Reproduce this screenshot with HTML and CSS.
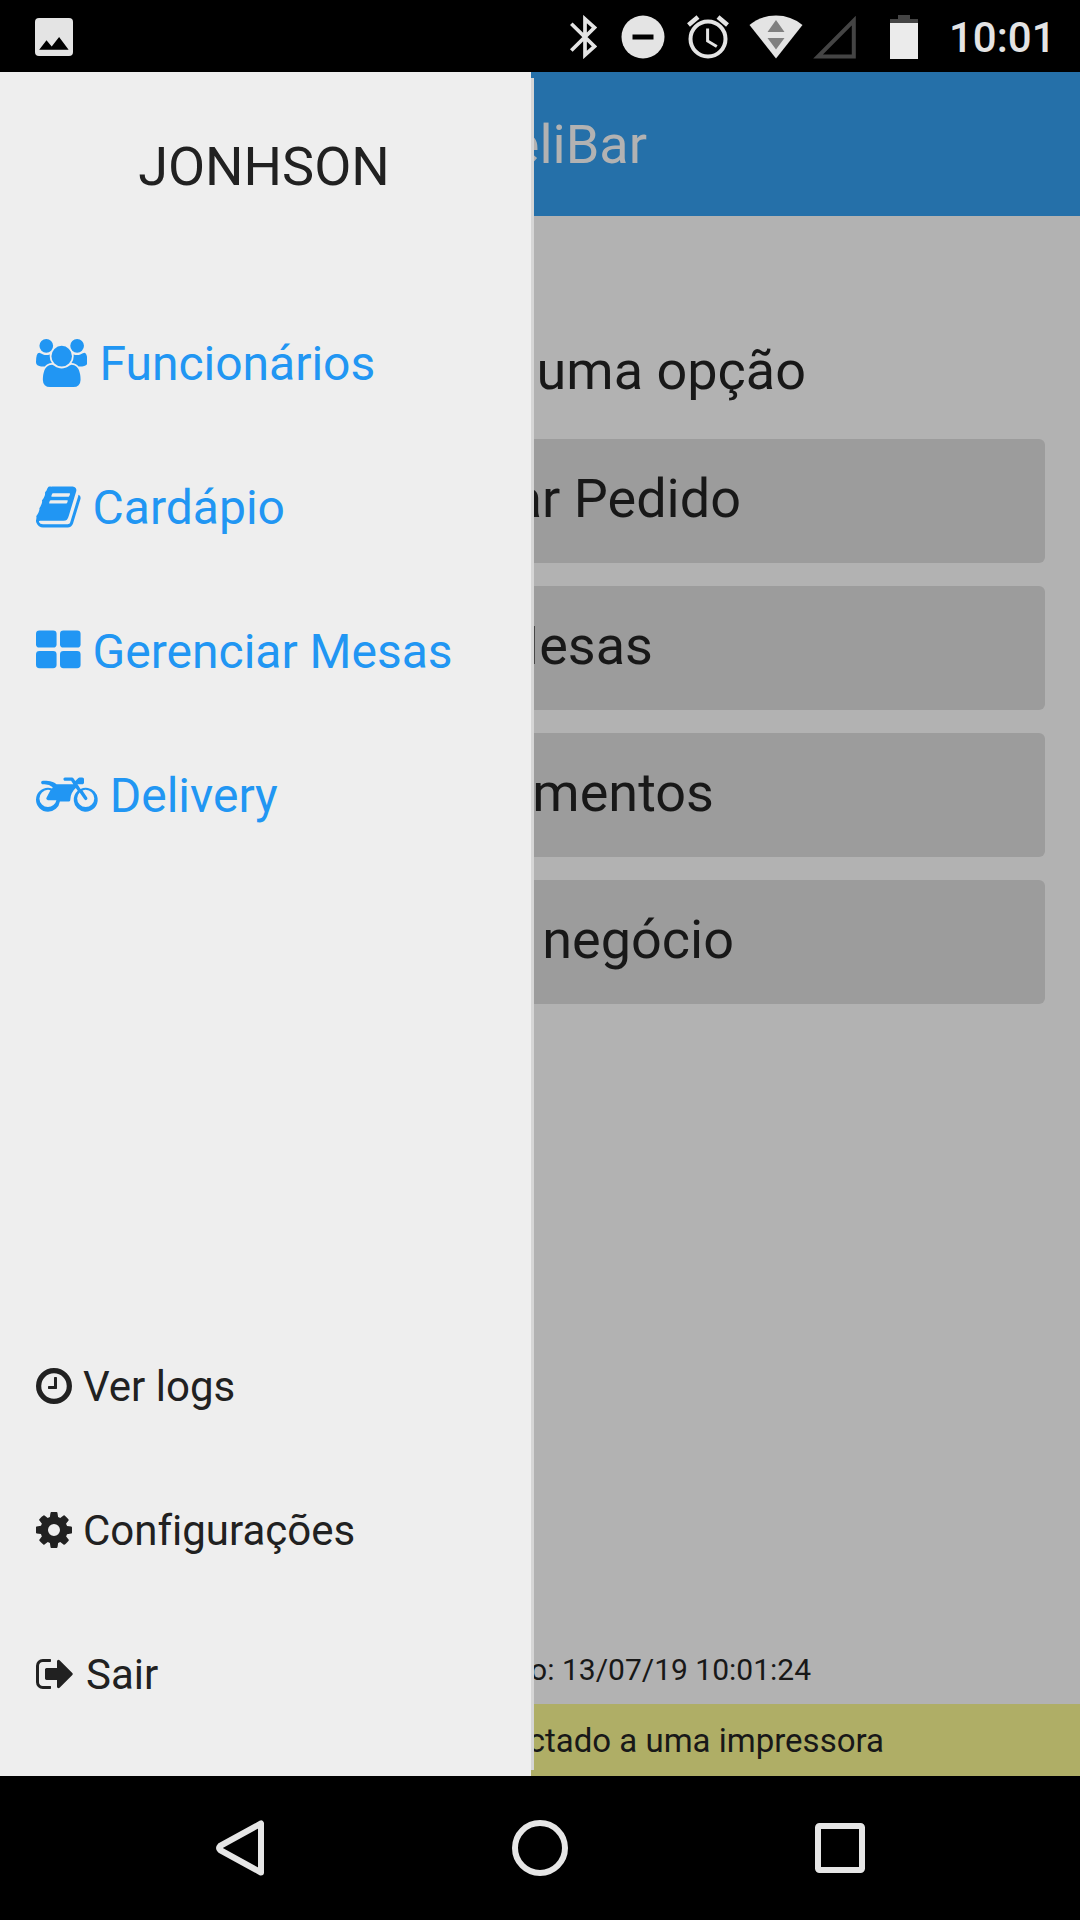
FILE: index.html
```html
<!DOCTYPE html>
<html lang="pt-BR">
<head>
<meta charset="utf-8">
<title>DeliBar</title>
<link rel="stylesheet" href="styles.css">
</head>
<body>
<div class="phone">
  <header class="status">
    <svg class="photo" viewBox="0 0 38 38"><path fill="#e4e4e4" d="M4 0h30q4 0 4 4v30q0 4-4 4H4q-4 0-4-4V4q0-4 4-4z"/><path d="M4.200 31.700l7.300-9.500 5.200 6.300 7.400-9.500 9.500 12.700z"/></svg>
    <svg class="bluetooth" viewBox="0 0 28 44" fill="none" stroke="#e4e4e4" stroke-width="3.700"><path d="M1.300 8.800L24.500 31.500 15 40V4l9.500 8.500L1.300 35.500"/></svg>
    <svg class="dnd" viewBox="0 0 44 44"><circle cx="22" cy="22" r="21.500" fill="#e4e4e4"/><path d="M11.500 19.500h21v5h-21z"/></svg>
    <svg class="alarm" viewBox="0 0 42 44" fill="none" stroke="#e4e4e4"><circle cx="21" cy="24" r="17.500" stroke-width="4"/><path d="M20.600 13.500V26l9.200 5.500" stroke-width="3"/><path d="M1.500 10L11 2M40.500 10L31 2" stroke-width="4.500"/></svg>
    <svg class="wifi" viewBox="0 0 54 44"><path fill="#e4e4e4" d="M.500 10Q12 .500 27 .500T53.500 10L27 43.500z"/><path fill="#808080" d="M18.500 17L27 5l8.500 12zM18.500 23L27 34.500 35.500 23z"/></svg>
    <svg class="signal" viewBox="0 0 43 44"><path fill="none" stroke="#444" stroke-width="4" d="M5 41.500h35.800V5.500z"/></svg>
    <svg class="battery" viewBox="0 0 28 44"><path fill="#444" d="M8 0h12v4h8v5H0V4h8z"/><path fill="#ebebeb" d="M0 8h28v36H0z"/></svg>
    <span class="time">10:01</span>
  </header>

  <div class="app">
    <div class="toolbar"><h1>DeliBar</h1></div>
    <main class="content">
      <h2>uma opção</h2>
      <div class="options">
        <div class="option order">Realizar Pedido</div>
        <div class="option tables">Mesas</div>
        <div class="option payments">Recebimentos</div>
        <div class="option business">Meu negócio</div>
      </div>
    </main>
    <p class="sync">Atualizado: 13/07/19 10:01:24</p>
    <p class="printer">Não conectado a uma impressora</p>

    <aside class="drawer">
      <div class="user">JONHSON</div>
      <nav class="menu">
        <a><svg class="w1920" viewBox="0 0 1920 1792"><path d="M593 896q-162 5-265 128h-134q-82 0-138-40.500t-56-118.500q0-353 124-353 6 0 43.500 21t97.500 42.500 119 21.500q67 0 133-23-5 37-5 66 0 139 81 256zm1071 637q0 120-73 189.500t-194 69.500h-874q-121 0-194-69.500t-73-189.500q0-53 3.500-103.500t14-109 26.500-108.500 43-97.500 62-81 85.500-53.500 111.500-20q10 0 43 21.500t73 48 107 48 135 21.500 135-21.500 107-48 73-48 43-21.500q61 0 111.500 20t85.500 53.500 62 81 43 97.500 26.500 108.500 14 109 3.500 103.500zm-1024-1277q0 106-75 181t-181 75-181-75-75-181 75-181 181-75 181 75 75 181zm704 384q0 159-112.500 271.500t-271.500 112.500-271.500-112.500-112.500-271.500 112.500-271.500 271.500-112.500 271.500 112.500 112.500 271.500zm576 225q0 78-56 118.500t-138 40.500h-134q-103-123-265-128 81-117 81-256 0-29-5-66 66 23 133 23 59 0 119-21.500t97.500-42.500 43.500-21q124 0 124 353zm-128-609q0 106-75 181t-181 75-181-75-75-181 75-181 181-75 181 75 75 181z"/></svg><span>Funcionários</span></a>
        <a><svg class="w1664" viewBox="0 0 1664 1792"><path d="M1639 478q40 57 18 129l-275 906q-19 64-76.500 107.500t-122.500 43.500h-923q-77 0-148.500-53.500t-99.500-131.500q-24-67-2-127 0-4 3-27t4-37q1-8-3-21.500t-3-19.500q2-11 8-21t16.500-23.500 16.500-23.500q23-38 45-91.500t30-91.500q3-10 .5-30t-.5-28q3-11 17-28t17-23q21-36 42-92t25-90q1-9-2.500-32t.5-28q4-13 22-30.500t22-22.500q19-26 42.500-84.500t27.500-96.500q1-8-3-25.500t-2-26.500q2-8 9-18t18-23 17-21q8-12 16.500-30.500t15-35 16-36 19.500-32 26.500-23.500 36-11.500 47.500 5.500l-1 3q38-9 51-9h761q74 0 114 56t18 130l-274 906q-36 119-71.500 153.500t-128.500 34.500h-869q-27 0-38 15-11 16-1 43 24 70 144 70h923q29 0 56-15.500t35-41.500l300-987q7-22 5-57 38 15 59 43zm-1064 2q-4 13 2 22.500t20 9.500h608q13 0 25.500-9.500t16.500-22.500l21-64q4-13-2-22.500t-20-9.500h-608q-13 0-25.500 9.500t-16.500 22.500zm-83 256q-4 13 2 22.500t20 9.500h608q13 0 25.500-9.500t16.500-22.500l21-64q4-13-2-22.500t-20-9.500h-608q-13 0-25.500 9.500t-16.500 22.500z"/></svg><span>Cardápio</span></a>
        <a><svg class="w1664" viewBox="0 0 1664 1792"><rect y="128" width="768" height="640" rx="128"/><rect x="896" y="128" width="768" height="640" rx="128"/><rect y="896" width="768" height="640" rx="128"/><rect x="896" y="896" width="768" height="640" rx="128"/></svg><span>Gerenciar Mesas</span></a>
        <a><svg class="w2304" viewBox="0 0 2304 1792"><path transform="translate(0 128)" d="M2301 892q12 103-22 198.500t-99 163.500-158.500 106-196.500 31q-161-11-279.500-125t-134.500-274q-12-111 27.500-210.500t118.500-170.500l-71-107q-96 80-151 194t-55 244q0 27-18.500 46.500t-45.500 19.500h-325q-23 164-149 274t-294 110q-185 0-316.500-131.500t-131.500-316.500 131.500-316.500 316.500-131.500q76 0 152 27l24-45q-123-110-304-110h-64q-26 0-45-19t-19-45 19-45 45-19h128q78 0 145 13.500t116.500 38.500 71.500 39.500 51 36.500h627l-85-128h-222q-30 0-49-22.500t-14-52.500q4-23 23-38t43-15h253q33 0 53 28l70 105 114-114q19-19 46-19h101q26 0 45 19t19 45v128q0 26-19 45t-45 19h-179l115 172q131-63 275-36 143 26 244 134.500t118 253.500zm-1853 324q115 0 203-72.500t111-183.500h-314q-35 0-55-31-18-32-1-63l147-277q-47-13-91-13-132 0-226 94t-94 226 94 226 226 94zm1408 0q132 0 226-94t94-226-94-226-226-94q-60 0-121 24l174 260q15 23 10 49t-27 40q-15 11-36 11-35 0-53-29l-174-260q-93 95-93 225 0 132 94 226t226 94z"/></svg><span>Delivery</span></a>
      </nav>
      <nav class="menu secondary">
        <a><svg class="w1536" viewBox="0 0 1536 1792"><circle cx="768" cy="896" r="656" fill="none" stroke="currentColor" stroke-width="224"/><path d="M896 544v448q0 14-9 23t-23 9h-320q-14 0-23-9t-9-23v-64q0-14 9-23t23-9h224v-352q0-14 9-23t23-9h64q14 0 23 9t9 23z"/></svg><span>Ver logs</span></a>
        <a><svg class="w1536" viewBox="0 0 1536 1792"><path d="M1024 896q0-106-75-181t-181-75-181 75-75 181 75 181 181 75 181-75 75-181zm512-109v222q0 12-8 23t-20 13l-185 28q-19 54-39 91 35 50 107 138 10 12 10 25t-9 23q-27 37-99 108t-94 71q-12 0-26-9l-138-108q-44 23-91 38-16 136-29 186-7 28-36 28h-222q-14 0-24.500-8.500t-11.500-21.500l-28-184q-49-16-90-37l-141 107q-10 9-25 9-14 0-25-11-126-114-165-168-7-10-7-23 0-12 8-23 15-21 51-66.500t54-70.500q-27-50-41-99l-183-27q-13-2-21-12.500t-8-23.500v-222q0-12 8-23t19-13l186-28q14-46 39-92-40-57-107-138-10-12-10-24 0-10 9-23 26-36 98.500-107.500t94.500-71.500q13 0 26 10l138 107q44-23 91-38 16-136 29-186 7-28 36-28h222q14 0 24.500 8.500t11.500 21.500l28 184q49 16 90 37l142-107q9-9 24-9 13 0 25 10 129 119 165 170 7 8 7 22 0 12-8 23-15 21-51 66.500t-54 70.500q26 50 41 98l183 28q13 2 21 12.500t8 23.500z"/></svg><span>Configurações</span></a>
        <a><svg class="w1664" viewBox="0 0 1664 1792"><path d="M640 1440q0 4 1 20t.5 26.500-3 23.500-10 19.500-20.500 6.500h-320q-119 0-203.500-84.500t-84.500-203.500v-704q0-119 84.500-203.500t203.500-84.500h320q13 0 22.500 9.500t9.500 22.500q0 4 1 20t.5 26.500-3 23.500-10 19.500-20.500 6.500h-320q-66 0-113 47t-47 113v704q0 66 47 113t113 47h312l11.500 1 11.500 3 8 5.500 7 9 2 13.500zM1568 896q0 26-19 45l-544 544q-19 19-45 19t-45-19-19-45v-288h-448q-26 0-45-19t-19-45v-384q0-26 19-45t45-19h448v-288q0-26 19-45t45-19 45 19l544 544q19 19 19 45z"/></svg><span>Sair</span></a>
      </nav>
    </aside>
  </div>

  <footer class="navbar">
    <svg class="back" viewBox="0 0 48 56"><path d="M45 3.500v49L4 30q-2-2 0-4z"/></svg>
    <svg class="home" viewBox="0 0 56 56"><circle cx="28" cy="28" r="25"/></svg>
    <svg class="recent" viewBox="0 0 50 50"><rect x="3" y="3" width="44" height="44" rx="1.500"/></svg>
  </footer>
</div>
</body>
</html>
```
FILE: styles.css
```css
* { box-sizing: border-box; margin: 0; padding: 0; }
body { font-family: Roboto, sans-serif; font-variant-ligatures: none; background: #000; color: #181818; }
svg { display: block; flex: none; }

.phone { width: 1080px; height: 1920px; display: flex; flex-direction: column; overflow: hidden; }

.status { height: 72px; display: flex; align-items: center; padding: 1px 32px 0 35px; background: #000; }
.photo { width: 38px; height: 38px; margin-right: auto; }
.bluetooth { width: 28px; height: 44px; margin-right: 23px; }
.dnd { width: 44px; height: 44px; margin-right: 22px; }
.alarm { width: 42px; height: 44px; margin-right: 20px; }
.wifi { width: 54px; height: 44px; margin-right: 10px; }
.signal { width: 43px; height: 44px; margin-right: 34px; }
.battery { width: 28px; height: 44px; margin-right: 31px; }
.time { width: 99px; font-size: 42px; font-weight: 500; line-height: 48px; color: #e4e4e4; white-space: nowrap; padding-top: 3px; }

.app { position: relative; flex: 1; display: flex; flex-direction: column; background: #b2b2b2; text-align: right; white-space: nowrap; }
.toolbar { height: 144px; display: flex; align-items: center; justify-content: flex-end; padding-right: 433px; background: #2570a9; }
.toolbar h1 { font-size: 54px; font-weight: 400; color: #b2b2b2; }
.content { flex: 1; }
.content h2 { font-size: 54px; font-weight: 400; line-height: 64px; padding: 123px 274px 36px 0; }
.options { display: flex; flex-direction: column; gap: 23px; padding: 0 35px; }
.option { height: 124px; padding-top: 28px; font-size: 54px; line-height: 64px; border-radius: 6px; background: #9c9c9c; }
.order { padding-right: 304px; }
.tables { padding-right: 392px; }
.payments { padding-right: 331px; }
.business { padding-right: 311px; }
.sync { height: 70px; padding-right: 269px; font-size: 30px; line-height: 72px; }
.printer { height: 72px; padding-right: 196px; font-size: 33px; line-height: 74px; background: #afae66; }

.drawer { position: absolute; left: 0; top: 0; width: 531px; height: 100%; display: flex; flex-direction: column; background: #eee; color: #212121; text-align: left; }
.drawer::after { content: ""; position: absolute; left: 531px; top: 6px; bottom: 6px; width: 3px; background: #d6d6d6; }
.user { height: 219px; padding-top: 63px; font-size: 54px; line-height: 64px; text-align: center; padding-right: 3px; }
.menu { color: #2196f3; font-size: 48px; }
.menu a { display: flex; align-items: center; height: 144px; padding-left: 36px; gap: .25em; }
.menu svg { height: 1em; fill: currentColor; }
.secondary { margin-top: auto; padding-bottom: 30px; color: #212121; font-size: 42px; }
.secondary a { gap: 11px; }
.w1536 { width: .857em; }
.w1664 { width: .929em; }
.w1920 { width: 1.071em; }
.w2304 { width: 1.286em; }

.navbar { height: 144px; display: flex; align-items: center; justify-content: space-between; padding: 0 215px 0 216px; background: #000; }
.navbar svg { fill: none; stroke: #e6e6e6; stroke-width: 6; stroke-linejoin: round; }
.back { width: 48px; height: 56px; }
.home { width: 56px; height: 56px; }
.recent { width: 50px; height: 50px; }
```
